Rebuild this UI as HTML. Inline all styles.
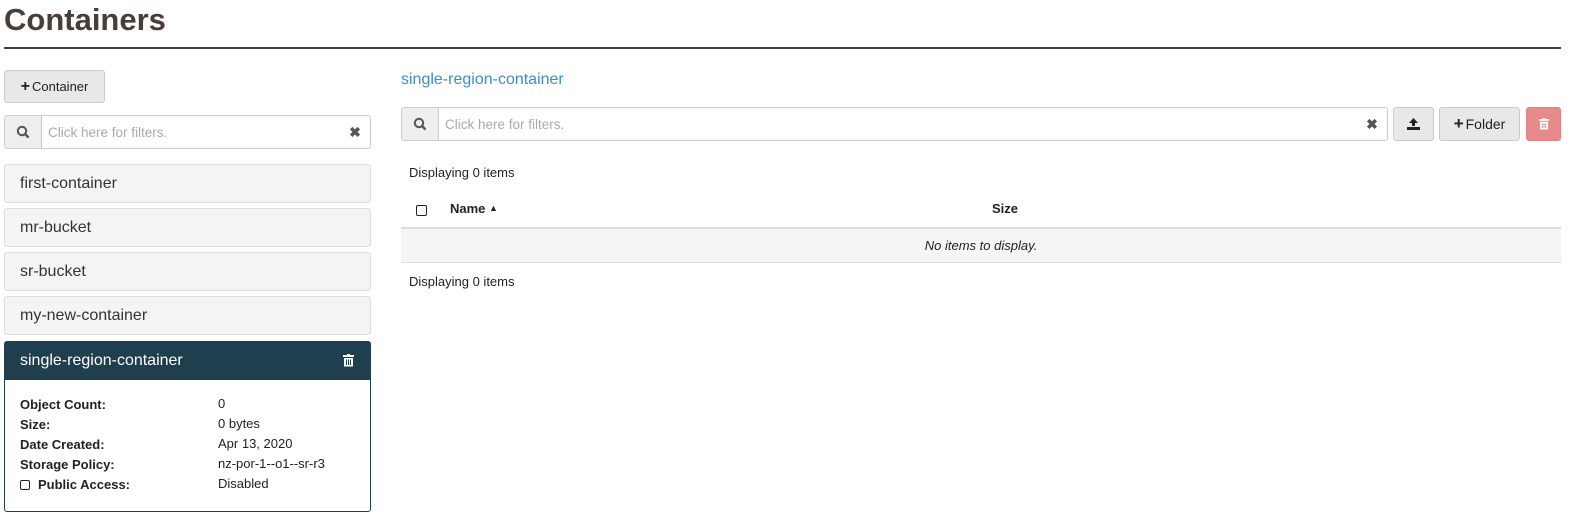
<!DOCTYPE html>
<html><head><style>
*{box-sizing:border-box;margin:0;padding:0}
body{width:1587px;height:524px;background:#fff;font-family:"Liberation Sans",sans-serif;color:#222;position:relative;overflow:hidden}
.a{position:absolute}
.btn{position:absolute;background:#e6e8e9;border:1px solid #c9cccd;border-radius:3px;font-size:13px;display:flex;align-items:center;justify-content:center;color:#222}
.inp{position:absolute;border:1px solid #ccc;border-radius:3px;background:#fff;display:flex}
.inp .s{width:37px;background:#eeeeee;border-right:1px solid #ccc;display:flex;align-items:center;justify-content:center}
.inp .t{flex:1;color:#aaa;font-size:13.5px;display:flex;align-items:center;padding-left:6px}
.inp .x{width:30px;display:flex;align-items:center;justify-content:center;color:#555;font-size:14px;font-weight:bold}
.item{position:absolute;left:4px;width:367px;height:39px;background:#f4f4f4;border:1px solid #ddd;border-radius:3px;font-size:16px;padding-left:15px;display:flex;align-items:center;color:#333}
.dl{position:absolute;font-size:13px;line-height:20px}
</style></head><body>
<div class="a" style="left:4px;top:2px;font-size:31px;font-weight:bold;color:#4a3d37">Containers</div>
<div class="a" style="left:4px;top:47px;width:1557px;height:2px;background:#4a3d37"></div>

<div class="btn" style="left:4px;top:70px;width:101px;height:33px"><b style="font-size:16px;margin-right:2px">+</b>Container</div>
<div class="inp" style="left:4px;top:115px;width:367px;height:34px">
<div class="s"><svg width="14" height="14" viewBox="0 0 14 14"><circle cx="6" cy="6" r="4.2" fill="none" stroke="#555" stroke-width="2"/><path d="M9 9l3.5 3.5" stroke="#555" stroke-width="2.4"/></svg></div>
<div class="t">Click here for filters.</div><div class="x">✖</div></div>

<div class="item" style="top:164px">first-container</div>
<div class="item" style="top:208px">mr-bucket</div>
<div class="item" style="top:252px">sr-bucket</div>
<div class="item" style="top:296px">my-new-container</div>
<div class="a" style="left:4px;top:341px;width:367px;height:171px;border:1px solid #1f3f4f;border-radius:3px">
<div style="height:38px;background:#1f3f4f;color:#fff;font-size:16px;padding-left:15px;display:flex;align-items:center;position:relative">single-region-container
<svg class="a" style="right:16px;top:12px" width="11" height="13" viewBox="0 0 11 13"><rect x="0" y="1" width="11" height="2" fill="#fff"/><rect x="4" y="0" width="3" height="2" fill="#fff"/><path d="M1 4h9v8.5H1z" fill="#fff"/><path d="M3.5 5.5v5.5M5.5 5.5v5.5M7.5 5.5v5.5" stroke="#1f3f4f" stroke-width="1"/></svg></div>
</div>
<div class="dl" style="left:20px;top:395px;font-weight:bold">Object Count:<br>Size:<br>Date Created:<br>Storage Policy:<br><span style="display:inline-block;width:10px;height:10px;border:1.5px solid #222;border-radius:2px;margin-right:8px;vertical-align:-1px"></span>Public Access:</div>
<div class="dl" style="left:218px;top:394px">0<br>0 bytes<br>Apr 13, 2020<br>nz-por-1--o1--sr-r3<br>Disabled</div>

<div class="a" style="left:401px;top:71px;font-size:16px;color:#3a8fc8">single-region-container</div>
<div class="inp" style="left:401px;top:107px;width:987px;height:34px">
<div class="s"><svg width="14" height="14" viewBox="0 0 14 14"><circle cx="6" cy="6" r="4.2" fill="none" stroke="#555" stroke-width="2"/><path d="M9 9l3.5 3.5" stroke="#555" stroke-width="2.4"/></svg></div>
<div class="t">Click here for filters.</div><div class="x">✖</div></div>
<div class="btn" style="left:1393px;top:107px;width:41px;height:34px"><svg width="13" height="12" viewBox="0 0 13 12"><path d="M6.5 0L11 5H8v3H5V5H2z" fill="#222"/><rect x="0" y="9" width="13" height="3" fill="#222"/></svg></div>
<div class="btn" style="left:1439px;top:107px;width:81px;height:34px;font-size:14px"><b style="font-size:17px;margin-right:2px">+</b>Folder</div>
<div class="btn" style="left:1526px;top:107px;width:35px;height:34px;background:#e68a8a;border-color:#e08080"><svg width="10" height="12" viewBox="0 0 11 13"><rect x="0" y="1" width="11" height="2" fill="#fff"/><rect x="4" y="0" width="3" height="2" fill="#fff"/><path d="M1 4h9v8.5H1z" fill="#fff"/><path d="M3.5 5.5v5.5M5.5 5.5v5.5M7.5 5.5v5.5" stroke="#e68a8a"/></svg></div>

<div class="a" style="left:409px;top:165px;font-size:13px">Displaying 0 items</div>
<div class="a" style="left:416px;top:205px;width:11px;height:11px;border:1.5px solid #222;border-radius:2px"></div>
<div class="a" style="left:450px;top:201px;font-size:13px;font-weight:bold">Name <span style="font-size:9px;vertical-align:2px">▲</span></div>
<div class="a" style="left:992px;top:201px;font-size:13px;font-weight:bold">Size</div>
<div class="a" style="left:401px;top:227px;width:1160px;height:2px;background:#ddd"></div>
<div class="a" style="left:401px;top:229px;width:1160px;height:34px;background:#f5f5f5;border-bottom:1px solid #ddd;font-size:13px;font-style:italic;display:flex;align-items:center;justify-content:center">No items to display.</div>
<div class="a" style="left:409px;top:274px;font-size:13px">Displaying 0 items</div>
</body></html>
